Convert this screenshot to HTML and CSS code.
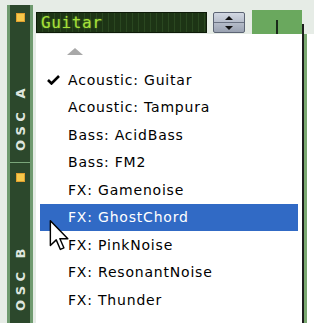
FILE: index.html
```html
<!DOCTYPE html>
<html lang="en">
<head>
    <meta charset="UTF-8">
    <meta name="viewport" content="width=device-width, initial-scale=1.0">
    <title>Oscillator preset</title>
    <link rel="stylesheet" href="styles.css">
</head>
<body>
    <div class="screen">
        <aside class="osc-strip">
            <section class="osc">
                <span class="led"></span>
                <span class="osc-label">OSC A</span>
            </section>
            <section class="osc osc-b">
                <span class="led"></span>
                <span class="osc-label">OSC B</span>
            </section>
        </aside>

        <div class="main">
            <div class="toolbar">
                <div class="lcd">Guitar</div>
                <div class="spinner">
                    <span class="spin spin-up"></span>
                    <span class="spin spin-down"></span>
                </div>
                <div class="knob-panel"><span class="tick"></span></div>
                <span class="rail"></span>
            </div>

            <div class="body-row">
                <ul class="menu">
                    <li class="scroll-up"><span class="arrow-up"></span></li>
                    <li class="checked">
                        <svg class="check" width="13" height="10" viewBox="0 0 13 10">
                            <path d="M1 5 L4.5 8.5 L12 1" fill="none" stroke="#000" stroke-width="2.6"/>
                        </svg>Acoustic: Guitar
                    </li>
                    <li>Acoustic: Tampura</li>
                    <li>Bass: AcidBass</li>
                    <li>Bass: FM2</li>
                    <li>FX: Gamenoise</li>
                    <li class="active">FX: GhostChord</li>
                    <li>FX: PinkNoise</li>
                    <li>FX: ResonantNoise</li>
                    <li>FX: Thunder</li>
                </ul>
                <div class="side-strip"></div>
            </div>
        </div>

        <!-- mouse pointer sits over the menu -->
        <svg class="cursor" width="21" height="31" viewBox="0 0 12.5 19.5">
            <path d="M0.5 0.5 L0.5 16 L4.2 12.5 L6.8 18.5 L9 17.5 L6.5 11.8 L11.5 11.8 Z" fill="#fff" stroke="#000" stroke-width="0.9" stroke-linejoin="round"/>
        </svg>
    </div>
</body>
</html>
```

FILE: styles.css
```css
body {
    margin: 0;
    background-color: #e6ece6;
    font-family: "DejaVu Sans", sans-serif;
}

.screen {
    position: relative;
    display: flex;
    width: 314px;
    height: 323px;
    padding-left: 7px;
    box-sizing: border-box;
    overflow: hidden;
}

/* left oscillator strip */
.osc-strip {
    width: 26px;
    margin-top: 5px;
    box-sizing: border-box;
    background-color: #2c482c;
    border-left: 3px solid #6f9a6f;
    border-right: 3px solid #6f9a6f;
    display: flex;
    flex-direction: column;
}

.osc {
    height: 157px;
    border-bottom: 1px solid #7aa67a;
    display: flex;
    flex-direction: column;
    align-items: center;
}

.osc-b {
    border-bottom: none;
}

.led {
    width: 9px;
    height: 9px;
    margin-top: 8px;
    box-sizing: border-box;
    background-color: #f6c84a;
    border: 1px solid #e0a030;
}

.osc-b .led {
    margin-top: 10px;
}

.osc-label {
    margin-top: 62px;
    writing-mode: vertical-rl;
    transform: rotate(180deg);
    font-size: 13px;
    font-weight: bold;
    letter-spacing: 4.5px;
    color: #dfe6df;
}

/* right side: toolbar and popup */
.main {
    flex: 1;
    display: flex;
    flex-direction: column;
    margin-left: 3px;
}

.toolbar {
    height: 34px;
    display: flex;
    align-items: flex-start;
}

.lcd {
    width: 171px;
    height: 21px;
    margin-top: 12px;
    box-sizing: border-box;
    padding-left: 4px;
    border: 1px solid #0d1a08;
    background: repeating-linear-gradient(90deg, #1d3415 0 5px, #2a4720 5px 6px);
    font-family: "DejaVu Sans Mono", monospace;
    font-size: 16px;
    line-height: 19px;
    letter-spacing: 0.6px;
    color: #a6e03a;
    text-shadow: 0 0 2px rgba(160, 230, 50, 0.5);
}

.spinner {
    width: 32px;
    height: 21px;
    margin-top: 12px;
    margin-left: 6px;
    box-sizing: border-box;
    border: 1px solid #5c6474;
    border-radius: 2px;
    background: linear-gradient(#d2d8e2, #9aa2b2);
    display: flex;
    flex-direction: column;
}

.spin {
    flex: 1;
    display: flex;
    justify-content: center;
    align-items: center;
}

.spin-up {
    border-bottom: 1px solid #6a7282;
}

.spin-up::after,
.spin-down::after {
    content: "";
    border-left: 4px solid transparent;
    border-right: 4px solid transparent;
}

.spin-up::after {
    border-bottom: 4px solid #111;
}

.spin-down::after {
    border-top: 4px solid #111;
}

.knob-panel {
    width: 50px;
    height: 24px;
    margin-top: 10px;
    margin-left: 7px;
    background-color: #6aa85e;
}

.tick {
    display: block;
    width: 2px;
    height: 14px;
    margin-top: 10px;
    margin-left: 24px;
    background-color: #1a2a1a;
}

.rail {
    width: 2px;
    height: 10px;
    margin-top: 24px;
    background-color: #1c1c1c;
}

.body-row {
    flex: 1;
    display: flex;
    background-color: #ffffff;
}

.menu {
    width: 268px;
    margin: 0;
    padding: 0 4px;
    box-sizing: border-box;
    list-style: none;
    background-color: #ffffff;
    border-right: 2px solid #1c1c1c;
}

.menu li {
    height: 27.5px;
    padding-left: 28px;
    display: flex;
    align-items: center;
    font-size: 14px;
    letter-spacing: 0.8px;
    color: #000000;
    white-space: nowrap;
}

.menu .scroll-up {
    height: 32px;
    padding-left: 27px;
    align-items: flex-start;
}

.arrow-up {
    margin-top: 14px;
    border-left: 8px solid transparent;
    border-right: 8px solid transparent;
    border-bottom: 7px solid #a8a8a8;
}

.menu .checked {
    padding-left: 7px;
}

.check {
    margin-right: 8px;
    flex-shrink: 0;
}

.menu .active {
    background-color: #316ac5;
    color: #ffffff;
}

.side-strip {
    width: 3px;
    background-color: #7aa870;
}

.cursor {
    position: absolute;
    left: 49px;
    top: 220px;
}
```
